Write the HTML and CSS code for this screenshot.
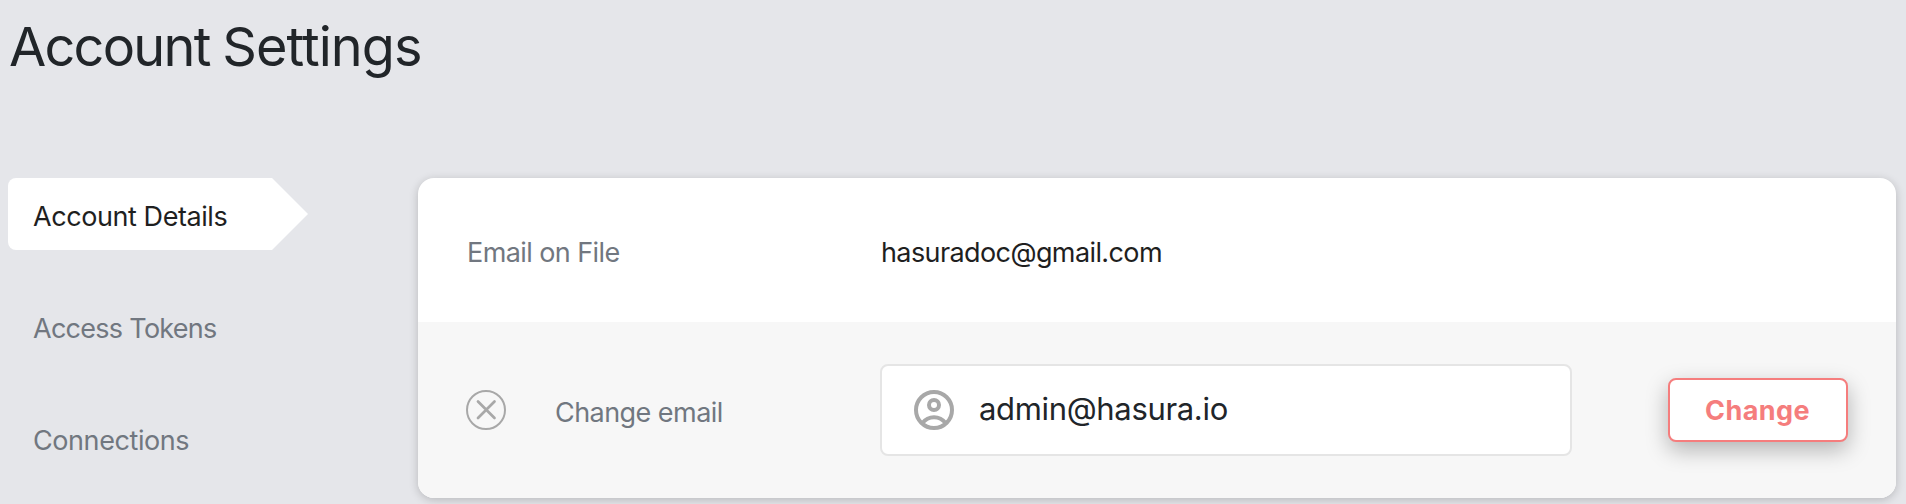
FILE: index.html
```html
<!DOCTYPE html>
<html lang="en">
<head>
<meta charset="utf-8">
<title>Account Settings</title>
<link rel="stylesheet" href="styles.css">
</head>
<body>
<h1 class="title"><span class="title-lead">Account</span> Settings</h1>
<div class="layout">
  <nav class="nav">
    <a class="nav-item nav-active"><span class="nav-details">Account Details</span></a>
    <a class="nav-item"><span class="nav-tokens">Access Tokens</span></a>
    <a class="nav-item"><span class="nav-connections">Connections</span></a>
  </nav>
  <main class="card">
    <section class="row row-current">
      <span class="label label-file">Email on File</span>
      <span class="value">hasuradoc@gmail.com</span>
    </section>
    <section class="row row-change">
      <div class="change-label">
        <svg class="icon" viewBox="0 0 40 40" fill="none" stroke="#a8a8a8">
          <circle cx="20" cy="20" r="19" stroke-width="2"/>
          <path d="M12 11.5 28.5 28M28.5 11.5 12 28" stroke-width="2.7" stroke-linecap="round"/>
        </svg>
        <span class="label label-change">Change email</span>
      </div>
      <div class="field">
        <svg class="icon" viewBox="0 0 40 40" fill="none" stroke="#a8a8a8" stroke-width="4">
          <circle cx="20" cy="20" r="18"/>
          <circle cx="20" cy="15" r="5"/>
          <path d="M8.2 33.2C14.5 25.2 25.5 25.2 31.8 33.2"/>
        </svg>
        <span class="field-text">admin@hasura.io</span>
      </div>
      <button class="button">Change</button>
    </section>
  </main>
</div>
</body>
</html>
```
FILE: styles.css
```css
* { box-sizing: border-box; }
body {
  margin: 0;
  height: 504px;
  overflow: hidden;
  background: #e5e6ea;
  color: #1f1f1f;
  font: 27px/32px Inter, "Liberation Sans", sans-serif;
  white-space: nowrap;
}
.title {
  margin: 0;
  height: 178px;
  padding: 15px 0 0 9px;
  color: #212529;
  font-size: 54px;
  font-weight: 400;
  line-height: 64px;
  letter-spacing: -.95px;
  word-spacing: -1.5px;
}
.title-lead { letter-spacing: -1.75px; }
.layout {
  display: flex;
  gap: 110px;
  padding: 0 10px 0 8px;
}
.nav {
  display: flex;
  flex-direction: column;
  gap: 40px;
  width: 300px;
}
.nav-item {
  height: 72px;
  padding: 23px 0 0 25px;
  color: #717780;
}
.nav-active {
  color: #1f1f1f;
  background: #fff;
  border-radius: 8px;
  clip-path: polygon(0 0, 264px 0, 100% 50%, 264px 100%, 0 100%);
}
.nav-details { letter-spacing: -.43px; }
.nav-tokens { letter-spacing: -.72px; }
.nav-connections { letter-spacing: -.42px; }
.card {
  flex: 1;
  height: 320px;
  overflow: hidden;
  border-radius: 16px;
  background: #fff;
  box-shadow: 0 2px 10px rgba(0, 0, 0, .2);
}
.row {
  display: flex;
  padding: 0 48px;
}
.row-current {
  height: 144px;
  padding-top: 59px;
}
.row-change {
  height: 176px;
  align-items: center;
  background: #f7f7f7;
}
.label { color: #717780; }
.label-file {
  width: 415px;
  padding-left: 1px;
  letter-spacing: -.58px;
}
.value { letter-spacing: -.6px; }
.change-label {
  display: flex;
  align-items: center;
  gap: 49px;
  width: 414px;
}
.label-change {
  padding-top: 6px;
  letter-spacing: -.55px;
}
.icon {
  display: block;
  width: 40px;
  height: 40px;
}
.field {
  display: flex;
  align-items: center;
  gap: 25px;
  width: 692px;
  height: 92px;
  padding: 0 32px;
  border: 2px solid #e5e5e5;
  border-radius: 8px;
  background: #fff;
}
.field-text {
  padding-bottom: 2px;
  color: #212529;
  font-size: 31px;
  letter-spacing: -.33px;
}
.button {
  width: 180px;
  height: 64px;
  margin-left: auto;
  padding: 2px 1px 0 0;
  border: 2px solid #f57d7d;
  border-radius: 8px;
  background: #fff;
  box-shadow: 0 8px 22px rgba(0, 0, 0, .28);
  color: #f57d7d;
  font: 700 27px/32px Inter, "Liberation Sans", sans-serif;
  letter-spacing: .4px;
}
```
